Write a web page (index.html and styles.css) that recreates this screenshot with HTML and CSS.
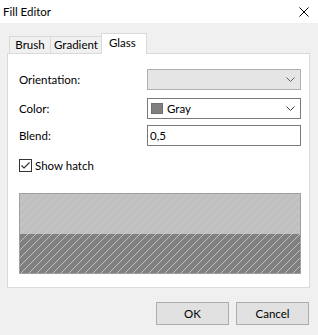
FILE: index.html
```html
<!DOCTYPE html>
<html>
<head>
<meta charset="utf-8">
<link rel="stylesheet" href="styles.css">
</head>
<body>
<div class="window">
  <div class="titlebar">
    <span class="title">Fill Editor</span>
    <svg class="close" width="10" height="10" viewBox="0 0 10 10"><path d="M0.5 0.5 L9.5 9.5 M9.5 0.5 L0.5 9.5" stroke="#000" stroke-width="1" fill="none"/></svg>
  </div>
  <div class="tabs">
    <div class="tab tab-brush">Brush</div>
    <div class="tab tab-gradient">Gradient</div>
    <div class="tab tab-glass active">Glass</div>
  </div>
  <div class="panel">
    <div class="row row-orient">
      <span class="label">Orientation:</span>
      <div class="combo combo-disabled">
        <span class="combo-text"></span>
        <svg class="chev" width="9" height="5" viewBox="0 0 9 5"><path d="M0.5 0.5 L4.5 4.5 L8.5 0.5" stroke="#606060" fill="none"/></svg>
      </div>
    </div>
    <div class="row row-color">
      <span class="label">Color:</span>
      <div class="combo">
        <span class="swatch"></span>
        <span class="combo-text">Gray</span>
        <svg class="chev" width="9" height="5" viewBox="0 0 9 5"><path d="M0.5 0.5 L4.5 4.5 L8.5 0.5" stroke="#404040" fill="none"/></svg>
      </div>
    </div>
    <div class="row row-blend">
      <span class="label">Blend:</span>
      <div class="textbox">0,5</div>
    </div>
    <div class="check-row">
      <svg class="checkbox" width="13" height="13" viewBox="0 0 13 13"><rect x="0.5" y="0.5" width="12" height="12" fill="#fff" stroke="#333"/><path d="M2.5 6.5 L5 9 L10.5 3.5" stroke="#333" stroke-width="1.2" fill="none"/></svg>
      <span class="check-label">Show hatch</span>
    </div>
    <div class="preview">
      <svg width="280" height="79" viewBox="0 0 280 79" shape-rendering="crispEdges">
        <defs>
          <pattern id="hl" width="8" height="8" patternUnits="userSpaceOnUse">
            <rect width="8" height="8" fill="#c0c0c0"/>
            <g fill="#c9c9c9">
              <rect x="0" y="7" width="1" height="1"/><rect x="1" y="6" width="1" height="1"/><rect x="2" y="5" width="1" height="1"/><rect x="3" y="4" width="1" height="1"/><rect x="4" y="3" width="1" height="1"/><rect x="5" y="2" width="1" height="1"/><rect x="6" y="1" width="1" height="1"/><rect x="7" y="0" width="1" height="1"/>
            </g>
          </pattern>
          <pattern id="hd" width="8" height="8" patternUnits="userSpaceOnUse">
            <rect width="8" height="8" fill="#808080"/>
            <g fill="#c0c0c0">
              <rect x="0" y="7" width="1" height="1"/><rect x="1" y="6" width="1" height="1"/><rect x="2" y="5" width="1" height="1"/><rect x="3" y="4" width="1" height="1"/><rect x="4" y="3" width="1" height="1"/><rect x="5" y="2" width="1" height="1"/><rect x="6" y="1" width="1" height="1"/><rect x="7" y="0" width="1" height="1"/>
            </g>
          </pattern>
        </defs>
        <rect x="0" y="0" width="280" height="40" fill="url(#hl)"/>
        <rect x="0" y="40" width="280" height="39" fill="url(#hd)"/>
      </svg>
    </div>
  </div>
  <div class="buttons">
    <div class="btn">OK</div>
    <div class="btn">Cancel</div>
  </div>
</div>
</body>
</html>
```

FILE: styles.css
```css
* { box-sizing: border-box; }
html, body { margin: 0; padding: 0; }
body {
  width: 318px;
  height: 335px;
  background: #f0f0f0;
  font-family: Lato, "Noto Sans", sans-serif;
  font-size: 11.5px;
  color: #000;
  overflow: hidden;
}
.window { display: flex; flex-direction: column; width: 318px; height: 335px; }
.titlebar {
  height: 23px;
  flex: none;
  background: #fff;
  display: flex;
  align-items: center;
  justify-content: space-between;
  padding: 0 9px 0 3px;
}
.title { line-height: 23px; }
.close { display: block; }
.tabs {
  display: flex;
  align-items: flex-end;
  margin: 9px 0 0 9px;
  height: 21px;
  flex: none;
  position: relative;
  z-index: 2;
}
.tab {
  height: 17px;
  border: 1px solid #dadada;
  border-bottom: none;
  background: #f0f0f0;
  display: flex;
  align-items: center;
  justify-content: center;
  line-height: 16px;
}
.tab-brush { width: 42px; }
.tab-gradient { width: 52px; margin-left: -1px; }
.tab-glass {
  width: 46px;
  height: 21px;
  margin-left: -1px;
  margin-bottom: -1px;
  background: #fff;
  padding-bottom: 3px;
  justify-content: flex-start;
  padding-left: 7px;
}
.panel {
  flex: none;
  margin: 0 0 0 7px;
  width: 303px;
  height: 235px;
  background: #fff;
  border: 1px solid #dadada;
  padding: 15px 0 0 11px;
  display: flex;
  flex-direction: column;
}
.row { display: flex; align-items: center; height: 21px; flex: none; }
.row-color { margin-top: 8px; }
.row-blend { margin-top: 6px; }
.label { width: 128px; }
.combo, .textbox {
  width: 154px;
  height: 21px;
  border: 1px solid #7a7a7a;
  background: #fff;
  display: flex;
  align-items: center;
}
.combo-disabled { background: #e5e5e5; border-color: #b0b0b0; }
.combo { padding: 0 5px 0 3px; }
.combo-text { flex: 1; }
.swatch {
  width: 12px;
  height: 11px;
  background: #808080;
  border: 1px solid #707070;
  margin-right: 4px;
}
.chev { display: block; }
.textbox { padding-left: 2px; }
.check-row { display: flex; align-items: center; margin-top: 13px; height: 13px; flex: none; }
.checkbox { display: block; margin-right: 3px; }
.preview {
  flex: none;
  margin-top: 21px;
  width: 282px;
  height: 81px;
  border: 1px solid #a0a0a0;
}
.preview svg { display: block; }
.buttons {
  display: flex;
  justify-content: flex-end;
  gap: 7px;
  margin-top: 14px;
  padding-right: 9px;
}
.btn {
  width: 73px;
  height: 23px;
  background: #e1e1e1;
  border: 1px solid #adadad;
  display: flex;
  align-items: center;
  justify-content: center;
}
```
